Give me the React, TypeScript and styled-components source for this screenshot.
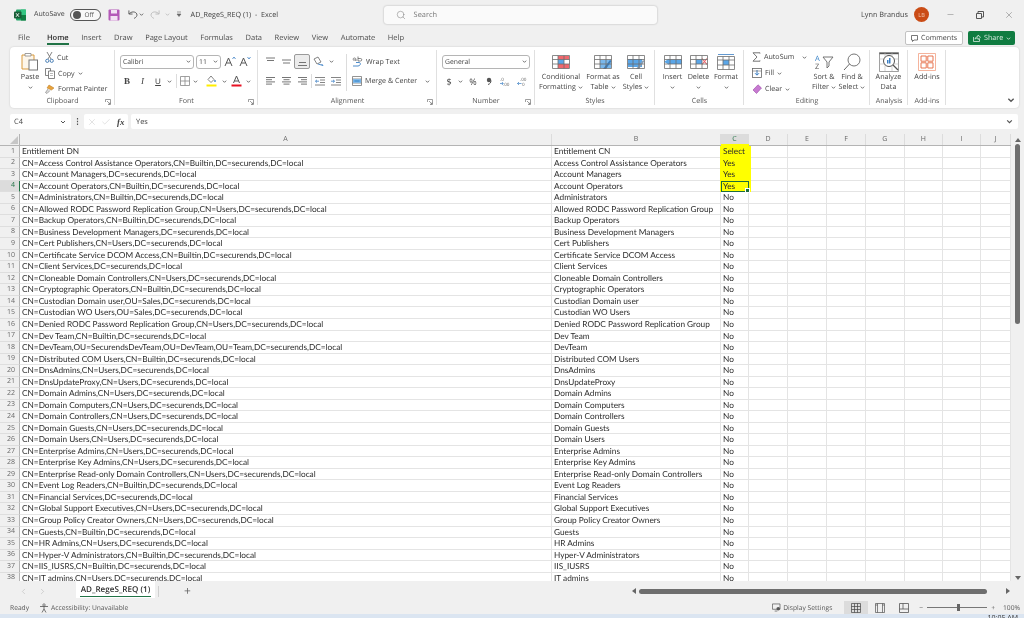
import React from "react";
import styled, { createGlobalStyle } from "styled-components";
import { Search, Minus, X, Check, ChevronLeft, ChevronRight } from "lucide-react";

const Global = createGlobalStyle`
  html, body { margin: 0; padding: 0; background: #f0f0f0; }
  body { font-family: "Open Sans", "Liberation Sans", sans-serif; text-rendering: geometricPrecision; }
  #root { width: 1024px; height: 618px; overflow: hidden; }
`;

const Page = styled.div`
  width: 1024px; height: 618px; display: flex; flex-direction: column; background: #f0f0f0;
  color: #3b3b3b; font-size: 7.9px; filter: blur(0.35px); overflow: hidden;
`;

/* ---------- title bar ---------- */
const TitleBar = styled.header`height: 29px; display: flex; align-items: center; padding-left: 14px; flex: none;`;
const AutoSaveLabel = styled.span`margin-left: 8px; font-size: 7px; color: #444;`;
const Toggle = styled.div`
  margin-left: 5px; width: 31px; height: 12px; border: 1px solid #555; border-radius: 7px; display: flex; align-items: center; box-sizing: border-box;
  gap: 4px; padding-left: 2px; font-size: 6.4px; color: #555; background: #f8f8f8; flex: none;
`;
const Knob = styled.i`width: 8px; height: 8px; border-radius: 50%; background: #555; display: block;`;
const QatSlot = styled.div<{ $w: number }>`width: ${p => p.$w}px; display: flex; justify-content: center; align-items: center; flex: none;`;
const DocTitle = styled.span`margin-left: 3px; width: 193px; font-size: 7.2px; color: #404040; flex: none; white-space: nowrap;`;
const SearchBox = styled.div`
  width: 273px; height: 18px; background: #fafafa; border-radius: 3px; box-shadow: 0 0 2px rgba(0,0,0,.3);
  display: flex; align-items: center; gap: 8px; padding-left: 12px; box-sizing: border-box; color: #777; font-size: 7.4px; flex: none;
`;
const UserName = styled.span`margin-left: auto; font-size: 7.3px; color: #444;`;
const Avatar = styled.div`
  margin-left: 6px; width: 15px; height: 15px; border-radius: 50%; background: #ca4c16; color: #f4c9b0; font-size: 5.6px;
  display: flex; align-items: center; justify-content: center;
`;
const WinControls = styled.div`display: flex; margin-left: 7px; width: 88px; color: #555;`;
const WinBtn = styled.div`width: 29px; display: flex; justify-content: center; align-items: center;`;

/* ---------- tabs ---------- */
const TabStrip = styled.nav`height: 18px; display: flex; align-items: center; padding: 0 9px 0 18px; gap: 12.6px; flex: none; font-size: 7.5px; color: #444;`;
const TabItem = styled.span<{ $on?: boolean }>`
  position: relative; font-weight: ${p => (p.$on ? 600 : 400)}; color: ${p => (p.$on ? "#2f2f2f" : "#4a4a4a")};
  &:first-child { margin-right: 4.5px; }
  ${p => p.$on && `&::after{content:"";position:absolute;left:0;right:0;bottom:-2px;height:2px;background:#217346;}`}
`;
const TabSpacer = styled.div`flex: 1;`;
const CommentsBtn = styled.div`
  width: 58px; height: 14px; border: 1px solid #c2c2c2; border-radius: 2px; background: #fff; box-sizing: border-box; flex: none;
  display: flex; align-items: center; justify-content: center; gap: 3px; font-size: 7.1px; color: #444;
`;
const ShareBtn = styled.div`
  margin-left: -7.6px; width: 47px; height: 14px; border-radius: 2px; background: #107c41; color: #d6eadf; box-sizing: border-box; flex: none;
  display: flex; align-items: center; gap: 3px; padding-left: 5px; font-size: 7.2px;
`;

/* ---------- ribbon ---------- */
const Ribbon = styled.section`
  margin: 0 5px 0 10px; height: 61px; background: #fff; border-radius: 4px; display: flex; flex: none; position: relative;
  box-shadow: 0 0 2px rgba(0,0,0,.18); font-size: 7.1px; color: #444;
`;
const Group = styled.div<{ $w: number }>`
  width: ${p => p.$w}px; flex: none; display: flex; flex-direction: column; position: relative; box-sizing: border-box;
  &::after { content: ""; position: absolute; right: 0; top: 3px; bottom: 3px; width: 1px; background: #e0e0e0; }
`;
const GroupBody = styled.div<{ $pl: number; $pt: number }>`flex: 1; display: flex; padding: ${p => p.$pt}px 0 0 ${p => p.$pl}px; min-height: 0;`;
const GroupLabel = styled.div`height: 11px; line-height: 9px; text-align: center; font-size: 7.1px; color: #555; flex: none;`;
const Launcher = styled.svg`position: absolute; right: 4px; bottom: 3px; width: 6px; height: 6px;`;
const Column = styled.div<{ $w?: number; $pt?: number; $ml?: number }>`
  display: flex; flex-direction: column; padding-top: ${p => p.$pt ?? 0}px; margin-left: ${p => p.$ml ?? 0}px;
  ${p => p.$w ? `width:${p.$w}px;flex:none;` : ""}
`;
const BigBtn = styled.div<{ $w: number; $ml?: number }>`
  width: ${p => p.$w}px; margin-left: ${p => p.$ml ?? 0}px; flex: none; display: flex; flex-direction: column; align-items: center; text-align: center;
`;
const BigIcon = styled.div<{ $h?: number }>`height: ${p => p.$h ?? 20}px; display: flex; align-items: center; justify-content: center; flex: none;`;
const BigText = styled.div`line-height: 10px; white-space: nowrap; font-size: 7.2px; color: #444; display: flex; align-items: center; justify-content: center; gap: 2px; height: 10px;`;
const SmallRow = styled.div`height: 16px; display: flex; align-items: center; gap: 3px; white-space: nowrap; font-size: 7.1px; color: #444;`;
const ToolRow = styled.div`height: 19.5px; display: flex; align-items: center; flex: none; white-space: nowrap;`;
const Slot = styled.div<{ $w: number; $on?: boolean }>`
  width: ${p => p.$w}px; height: 15px; flex: none; display: flex; align-items: center; justify-content: center; box-sizing: border-box; font-size: 9px; color: #444;
  ${p => p.$on && `background:#ececec;border:1px solid #9a9a9a;border-radius:2px;`}
`;
const Select = styled.div<{ $w: number; $ml?: number }>`
  width: ${p => p.$w}px; margin-left: ${p => p.$ml ?? 0}px; height: 14px; border: 1px solid #b5b5b5; border-radius: 3px; box-sizing: border-box; flex: none;
  display: flex; align-items: center; justify-content: space-between; padding: 0 2px; font-size: 6.8px; color: #444; background: #fff;
`;
const ThinSep = styled.div`width: 1px; height: 14px; background: #dcdcdc; flex: none;`;
const TallSep = styled.div`width: 1px; height: 37px; background: #dcdcdc; flex: none; margin: 2px 5px 0 0;`;
const Bold = styled.b`font-family: "Liberation Serif", serif; font-size: 9px;`;
const Ital = styled.i`font-family: "Liberation Serif", serif; font-size: 9px;`;
const Under = styled.u`font-family: "Liberation Sans", sans-serif; font-size: 8px;`;
const Collapse = styled.div`position: absolute; right: 4px; bottom: 4px; display: flex;`;

/* ---------- formula bar ---------- */
const FormulaBar = styled.div`height: 15px; margin: 6px 6px 0 10px; display: flex; flex: none; align-items: stretch;`;
const NameBox = styled.div`
  width: 61px; background: #fff; border-radius: 2px; display: flex; align-items: center; justify-content: space-between; padding: 0 5px 0 4px;
  box-sizing: border-box; font-size: 7.4px; color: #444;
`;
const Dots = styled.div`width: 13px; display: flex; align-items: center; justify-content: center; color: #555; font-size: 8px; font-weight: 700;`;
const FxBox = styled.div`
  width: 44px; background: #fff; border-radius: 2px; display: flex; align-items: center; gap: 4px; padding-left: 3px; box-sizing: border-box; color: #bbb;
`;
const Fx = styled.i`font-family: "Liberation Serif", serif; font-size: 9px; color: #444; font-weight: 700; margin-left: 2px;`;
const FormulaInput = styled.div`
  flex: 1; margin-left: 3px; background: #fff; border-radius: 2px; display: flex; align-items: center; justify-content: space-between;
  padding: 0 5px; font-size: 7.4px; color: #444;
`;

/* ---------- sheet ---------- */
const SheetWrap = styled.div`margin-top: 5px; height: 447px; display: flex; flex: none;`;
const Sheet = styled.div`width: 1011px; flex: none; overflow: hidden;`;
const columns = "20px 532px 169px 28px 39px 39px 39px 38.5px 38.5px 38px 30px";
const HeaderRow = styled.div`display: grid; grid-template-columns: ${columns}; height: 12px; border-bottom: 1px solid #b4b4b4; box-sizing: border-box;`;
const Corner = styled.div`border-right: 1px solid #b4b4b4; display: flex; justify-content: flex-end; align-items: flex-end; padding: 0 1px 1px 0;`;
const ColHead = styled.div<{ $on?: boolean }>`
  display: flex; align-items: center; justify-content: center; font-size: 7px; color: ${p => (p.$on ? "#217346" : "#666")};
  background: ${p => (p.$on ? "#dcdcdc" : "transparent")}; border-right: 1px solid #dcdcdc;
  ${p => p.$on && "box-shadow: inset 0 -1px 0 #217346;"}
`;
const Row = styled.div`display: grid; grid-template-columns: ${columns}; height: 11.54px;`;
const RowNum = styled.div<{ $on?: boolean }>`
  display: flex; align-items: center; justify-content: flex-end; padding-right: 4px; font-size: 7px; box-sizing: border-box;
  color: ${p => (p.$on ? "#217346" : "#6a6a6a")}; background: ${p => (p.$on ? "#dcdcdc" : "#f0f0f0")};
  border-right: 1px solid ${p => (p.$on ? "#217346" : "#b4b4b4")}; border-bottom: 1px solid #dedede;
`;
const Cell = styled.div<{ $hl?: boolean; $first?: boolean }>`
  background: ${p => (p.$hl ? "#ffff00" : "#fff")}; border-right: 1px solid #e4e4e4; border-bottom: 1px solid #e4e4e4; box-sizing: border-box;
  font-family: Lato, "Liberation Sans", sans-serif; font-size: 8.28px; line-height: 10.5px; padding-left: 2px; color: #2c2c2c; white-space: nowrap; position: relative;
  ${p => p.$hl && `border-color: #ffff00; box-shadow: 2px 0 0 #ffff00, -1px 0 0 #ffff00${p.$first ? ", 0 -2px 0 #ffff00" : ""}; z-index: 1;`}
`;
const ActiveCell = styled(Cell)`
  outline: 1.5px solid #1d6b3f; outline-offset: -1px; z-index: 2;
  &::after { content: ""; position: absolute; right: -2px; bottom: -2px; width: 3px; height: 3px; background: #1d6b3f; border: 0.5px solid #fff; }
`;
const VScroll = styled.aside`width: 13px; flex: none; display: flex; flex-direction: column; align-items: center; padding-top: 4px; box-sizing: border-box;`;
const VThumb = styled.div`width: 5px; height: 180px; margin-top: 2px; background: #6e6e6e; border-radius: 3px;`;
const Arrow = styled.div<{ $dir: "up" | "down" | "left" | "right" }>`
  width: 0; height: 0; flex: none;
  ${p => p.$dir === "up" && "border-left:3px solid transparent;border-right:3px solid transparent;border-bottom:4px solid #666;"}
  ${p => p.$dir === "down" && "border-left:3px solid transparent;border-right:3px solid transparent;border-top:4px solid #666;margin-top:auto;margin-bottom:1px;"}
  ${p => p.$dir === "left" && "border-top:3px solid transparent;border-bottom:3px solid transparent;border-right:4px solid #666;"}
  ${p => p.$dir === "right" && "border-top:3px solid transparent;border-bottom:3px solid transparent;border-left:4px solid #666;"}
`;

/* ---------- sheet tabs ---------- */
const TabBar = styled.div`height: 20px; display: flex; align-items: center; flex: none;`;
const SheetNav = styled.div`width: 76px; display: flex; gap: 10px; padding-left: 19px; box-sizing: border-box; flex: none; color: #aaa;`;
const SheetTab = styled.div`
  width: 79px; height: 17px; margin-bottom: 3px; background: #fff; flex: none; display: flex; align-items: center; justify-content: center;
  font-size: 8.1px; font-weight: 600; color: #2f2f2f; position: relative;
  &::after { content: ""; position: absolute; left: 4px; right: 4px; bottom: 1px; height: 1.5px; background: #217346; }
`;
const TabDivider = styled.div`width: 1px; height: 11px; background: #d0d0d0; margin-left: 3px; flex: none;`;
const AddSheet = styled.div`margin-left: 25px; font-size: 12px; color: #666; width: 8px; flex: none; line-height: 10px;`;
const HScroll = styled.div`margin-left: 440px; width: 378px; display: flex; align-items: center; flex: none;`;
const HThumb = styled.div`width: 348px; height: 5px; background: #6e6e6e; border-radius: 3px; margin-left: 3px;`;
const HRight = styled.div`margin-left: auto; display: flex;`;

/* ---------- status bar ---------- */
const StatusBar = styled.footer`height: 13px; display: flex; align-items: center; padding: 0 5px 0 10px; font-size: 6.7px; color: #555; flex: none;`;
const StatusItem = styled.span<{ $ml?: number }>`margin-left: ${p => p.$ml ?? 0}px; display: flex; align-items: center; gap: 2px; white-space: nowrap;`;
const StatusRight = styled.div`margin-left: auto; display: flex; align-items: center;`;
const DisplaySettings = styled.span`width: 60px; flex: none; display: flex; align-items: center; gap: 2px; white-space: nowrap;`;
const Views = styled.div`margin-left: 12px; display: flex; flex: none;`;
const ViewBtn = styled.div<{ $on?: boolean }>`
  width: 24px; height: 13px; display: flex; align-items: center; justify-content: center; background: ${p => (p.$on ? "#dcdcdc" : "transparent")}; flex: none;
`;
const ZoomCtl = styled.div`margin-left: 3px; display: flex; align-items: center; flex: none;`;
const ZoomSlider = styled.div`width: 60px; height: 1px; background: #777; margin: 0 4px; position: relative; flex: none;`;
const ZoomThumb = styled.i`position: absolute; left: 30px; top: -3px; width: 3px; height: 7px; background: #666;`;
const ZoomPct = styled.span`width: 16px; margin-left: 8px; flex: none; white-space: nowrap;`;
const Strip = styled.div`height: 5px; background: #dbe5f1; display: flex; justify-content: flex-end; padding-right: 6px; font-size: 7px; color: #333; overflow: hidden; line-height: 9px; flex: none;`;

/* ---------- icons ---------- */
const Chev = ({ s = 5, c = "#555" }: { s?: number; c?: string }) => (
  <svg width={s} height={s} viewBox="0 0 6 6"><path d="M1 2l2 2 2-2" fill="none" stroke={c} strokeWidth="1" /></svg>
);
const ExcelLogo = () => (
  <svg width="12" height="12" viewBox="0 0 12 12">
    <rect x="2" y="0.5" width="10" height="11" rx="1" fill="#21a366" />
    <rect x="7" y="0.5" width="5" height="5.5" fill="#33c481" />
    <rect x="7" y="6" width="5" height="5.5" fill="#107c41" />
    <rect x="0" y="2.5" width="7.5" height="7" rx="1" fill="#185c37" />
    <path d="M2 4.2l3 3.6M5 4.2l-3 3.6" stroke="#fff" strokeWidth="0.9" />
  </svg>
);
const SaveIcon = () => (
  <svg width="12" height="12" viewBox="0 0 12 12">
    <rect x="0.5" y="0.5" width="11" height="11" rx="1" fill="#b45ab8" />
    <rect x="3" y="1" width="6" height="3.5" fill="#f3e3f4" />
    <rect x="2.5" y="7" width="7" height="4.5" fill="#f3e3f4" />
  </svg>
);
const UndoIcon = ({ c, flip }: { c: string; flip?: boolean }) => (
  <svg width="10" height="11" viewBox="0 0 11 11" style={flip ? { transform: "scaleX(-1)" } : undefined}>
    <path d="M1 1v4h4M1.3 5C3 2 8.5 1.8 9.7 5c.7 2-.8 3.8-3 4.8" fill="none" stroke={c} strokeWidth="1" />
  </svg>
);
const QatMore = () => (
  <svg width="6" height="7" viewBox="0 0 6 7"><path d="M1 1h4M1 3l2 2.5L5 3z" fill="#666" stroke="#666" strokeWidth="0.6" /></svg>
);
const RestoreIcon = () => (
  <svg width="8" height="8" viewBox="0 0 8 8"><path d="M.5 2.5h5v5h-5zM2 2.5V.5h5.5V6H5.5" fill="none" stroke="#555" /></svg>
);
const CommentIco = () => (
  <svg width="7" height="7" viewBox="0 0 7 7"><path d="M.5.5h6v4.5H3L1.5 6.5V5h-1z" fill="none" stroke="#555" strokeWidth=".8" /></svg>
);
const ShareIco = () => (
  <svg width="8" height="8" viewBox="0 0 8 8"><path d="M.5 3v4.5h6V5M2 5.2C2.3 3.2 4 2.5 5 2.5V1l2.5 2.3L5 5.5V4C3.8 4 2.7 4.3 2 5.2z" fill="none" stroke="#d6eadf" strokeWidth=".8" /></svg>
);
const PasteIco = () => (
  <svg width="20" height="20" viewBox="0 0 20 20">
    <path d="M2 4h12v14H2z" fill="#fdf6ea" stroke="#d99a3c" strokeWidth="1" />
    <path d="M5 2.5h6V5H5z" fill="#fff" stroke="#888" strokeWidth=".8" />
    <rect x="9" y="9" width="8.5" height="10" fill="#fff" stroke="#777" strokeWidth="1" />
  </svg>
);
const CutIco = () => (
  <svg width="9" height="11" viewBox="0 0 9 11"><path d="M2 0l4 7M7 0L3 7" stroke="#777" strokeWidth=".9" fill="none" /><circle cx="2.3" cy="8.8" r="1.6" fill="none" stroke="#4a7fb5" /><circle cx="6.7" cy="8.8" r="1.6" fill="none" stroke="#4a7fb5" /></svg>
);
const CopyIco = () => (
  <svg width="10" height="11" viewBox="0 0 10 11"><path d="M.5.5h5v7h-5z" fill="#fff" stroke="#666" strokeWidth=".8" /><path d="M3.5 3h6v7.5h-6z" fill="#fff" stroke="#666" strokeWidth=".8" /><path d="M5 5.5h3M5 7.5h3" stroke="#999" strokeWidth=".7" /></svg>
);
const PainterIco = () => (
  <svg width="10" height="10" viewBox="0 0 10 10"><path d="M4 1l5 3-2.5 2L2 4z" fill="#e8a33d" stroke="#b9771f" strokeWidth=".5" /><path d="M3 5L.5 8.5 2 9.5 5 6.5" fill="#ddd" stroke="#777" strokeWidth=".6" /></svg>
);
const LauncherIco = () => (
  <Launcher viewBox="0 0 6 6"><path d="M.5 3V.5H5.5M5.5 .5V5.5H3M2 2l3 3M3.5 5H5V3.5" fill="none" stroke="#777" strokeWidth=".7" /></Launcher>
);
const GrowA = ({ down }: { down?: boolean }) => (
  <svg width="12" height="11" viewBox="0 0 12 11">
    <path d="M1 10l3.5-8L8 10M2.5 7h4" fill="none" stroke="#555" strokeWidth="1" />
    <path d={down ? "M8.5 1l1.5 2 1.5-2" : "M8.5 3l1.5-2 1.5 2"} fill="none" stroke="#3b7fc4" strokeWidth=".8" />
  </svg>
);
const Lines = ({ v }: { v: number[][] }) => (
  <svg width="11" height="10" viewBox="0 0 11 10">
    {v.map((l, i) => <path key={i} d={`M${l[0]} ${l[2]}H${l[1]}`} stroke="#666" strokeWidth=".9" />)}
  </svg>
);
const BordersIco = () => (
  <svg width="10" height="10" viewBox="0 0 10 10"><path d="M.5.5h9v9h-9zM5 .5v9M.5 5h9" fill="none" stroke="#888" strokeWidth=".8" /></svg>
);
const FillIco = () => (
  <svg width="11" height="12" viewBox="0 0 11 12"><path d="M5 1L2 4.5 5 7.5 8 4.5z" fill="#fff" stroke="#666" strokeWidth=".8" /><circle cx="9" cy="6" r=".9" fill="#3b7fc4" /><rect x="0.5" y="9.5" width="10" height="2" fill="#ffee00" /></svg>
);
const ColorA = () => (
  <svg width="11" height="12" viewBox="0 0 11 12"><path d="M2.5 8l3-7 3 7M3.5 6h4" fill="none" stroke="#555" strokeWidth="1" /><rect x="0.5" y="9.5" width="10" height="2" fill="#e81123" /></svg>
);
const OrientIco = () => (
  <svg width="12" height="11" viewBox="0 0 12 11"><path d="M1 3l4-2 3 5-4 2z" fill="none" stroke="#666" strokeWidth=".8" /><path d="M5 8l5 1.5M10 9.5L8.5 8" stroke="#3b7fc4" strokeWidth=".9" fill="none" /></svg>
);
const IndentIco = ({ dec }: { dec?: boolean }) => (
  <svg width="10" height="9" viewBox="0 0 10 9"><path d="M0 .5h10M5 3h5M5 5.5h5M0 8h10" stroke="#666" strokeWidth=".8" /><path d={dec ? "M4 4.2H.5M2 2.8L.5 4.2 2 5.6" : "M0 4.2h3.5M2 2.8l1.5 1.4L2 5.6"} fill="none" stroke="#3b7fc4" strokeWidth=".8" /></svg>
);
const WrapIco = () => (
  <svg width="11" height="11" viewBox="0 0 11 11"><path d="M1 3.5C1 1.5 4 1.5 4 3.5V5M1 4h3" fill="none" stroke="#555" strokeWidth=".7" /><path d="M6 .5v4.5h2.5a1 1 0 000-2.5H6" fill="none" stroke="#555" strokeWidth=".7" /><path d="M1 10h5c2.5 0 3-3 1.5-3.5H4" fill="none" stroke="#3b7fc4" strokeWidth=".9" /></svg>
);
const MergeIco = () => (
  <svg width="10" height="10" viewBox="0 0 10 10"><path d="M.5.5h9v9h-9zM.5 3h9M.5 7h9" fill="none" stroke="#666" strokeWidth=".7" /><rect x="1" y="3.2" width="8" height="3.6" fill="#76b5ea" /><path d="M2.5 5h5" stroke="#1f6db5" strokeWidth=".7" /></svg>
);
const CommaIco = () => (
  <svg width="6" height="8" viewBox="0 0 6 8"><circle cx="3" cy="3" r="2.2" fill="#555" /><path d="M5 3.5C5 5.5 4 7 2 7.5" fill="none" stroke="#555" strokeWidth="1" /></svg>
);
const DecimalIco = ({ dec }: { dec?: boolean }) => (
  <svg width="11" height="11" viewBox="0 0 11 11">
    <text x={dec ? "3" : "0"} y="4.5" fontSize="4.6" fontFamily="Open Sans" fill="#666">{dec ? ".00" : ".0"}</text>
    <text x={dec ? "5" : "3"} y="10" fontSize="4.6" fontFamily="Open Sans" fill="#666">{dec ? "0" : ".00"}</text>
    <path d={dec ? "M.5 7.5h4M2 6L.5 7.5 2 9" : "M0 7.5h3M2 6l1.2 1.5L2 9"} fill="none" stroke="#3b7fc4" strokeWidth=".7" />
  </svg>
);
const Table = ({ children, w = 18, h = 14 }: { children?: React.ReactNode; w?: number; h?: number }) => (
  <svg width={w} height={h} viewBox="0 0 18 14">
    {children}
    <path d="M.5.5h17v13H.5zM.5 4.5h17M.5 9h17M6 .5v13M12 .5v13" fill="none" stroke="#6d6d6d" strokeWidth=".8" />
  </svg>
);
const CondIco = () => <Table><rect x="6" y="1" width="6" height="3.5" fill="#f0686e" /><rect x="6" y="4.5" width="6" height="4.5" fill="#5aa6e8" /><rect x="6" y="9" width="11" height="4.5" fill="#f0686e" /><rect x="12" y="1" width="5" height="3.5" fill="#f0686e" /></Table>;
const FmtTblIco = () => <Table><rect x="6" y="5" width="11" height="8" fill="#7ab8ec" /><path d="M9 14l7-9 1.5 1L12 14z" fill="#3a7dbd" /></Table>;
const CellStyIco = () => <Table><rect x="1" y="4" width="14" height="8" fill="#5aa6e8" /><path d="M9 14l7-9 1.5 1L12 14z" fill="#8aa0b5" /></Table>;
const InsertIco = () => <Table><rect x="5" y="4.5" width="13" height="4.5" fill="#5aa6e8" /><path d="M0 6.7L5 3.7v6z" fill="#5aa6e8" /></Table>;
const DeleteIco = () => <Table><rect x="6" y="4.5" width="6" height="4.5" fill="#5aa6e8" /><path d="M12 3.5l5 6M17 3.5l-5 6" stroke="#e8636a" strokeWidth="1.1" /></Table>;
const FormatIco = () => (
  <svg width="18" height="16" viewBox="0 0 18 16"><path d="M1 .5h16" stroke="#3b7fc4" strokeWidth=".8" /><rect x="6" y="6" width="6" height="5" fill="#5aa6e8" /><path d="M.5 2.5h17v13H.5zM.5 6h17M.5 11h17M6 2.5v13M12 2.5v13" fill="none" stroke="#6d6d6d" strokeWidth=".8" /></svg>
);
const SigmaIco = () => (
  <svg width="9" height="10" viewBox="0 0 9 10"><path d="M8 1.5V.8H1L5 5 1 9.2h7v-.7" fill="none" stroke="#666" strokeWidth=".9" /></svg>
);
const FillDownIco = () => (
  <svg width="10" height="10" viewBox="0 0 10 10"><rect x=".5" y=".5" width="9" height="9" fill="#fff" stroke="#666" strokeWidth=".8" /><path d="M5 2v5M3 5.2L5 7.2 7 5.2" fill="none" stroke="#3b7fc4" strokeWidth="1" /><path d="M.5 3h9" stroke="#666" strokeWidth=".6" /></svg>
);
const EraserIco = () => (
  <svg width="10" height="10" viewBox="0 0 10 10"><path d="M6 .8L9.5 4 4.5 9.5 1 6z" fill="#c77ad1" stroke="#9a4aa6" strokeWidth=".6" /></svg>
);
const SortIco = () => (
  <svg width="20" height="18" viewBox="0 0 20 18">
    <text x="1" y="7.5" fontSize="7.5" fontFamily="Open Sans" fill="#2f7cc4">A</text>
    <text x="1" y="15.5" fontSize="7.5" fontFamily="Open Sans" fill="#555">Z</text>
    <path d="M9 4h10l-4 5v4l-2 2V9z" fill="none" stroke="#666" strokeWidth=".9" />
  </svg>
);
const FindIco = () => (
  <svg width="18" height="18" viewBox="0 0 18 18"><circle cx="11" cy="7" r="6" fill="none" stroke="#666" strokeWidth=".9" /><path d="M6.5 11L1 17" stroke="#666" strokeWidth="1" /></svg>
);
const AnalyzeIco = () => (
  <svg width="20" height="20" viewBox="0 0 20 20">
    <path d="M.5.5h19v19H.5z" fill="none" stroke="#777" strokeWidth=".7" />
    <path d="M.5 1.5h19" stroke="#555" strokeWidth="1.4" />
    <path d="M.5 7h19M.5 12h19M6 1v18M13 1v18" stroke="#bbb" strokeWidth=".6" />
    <circle cx="10" cy="9" r="5.5" fill="#fff" stroke="#555" strokeWidth="1" />
    <rect x="8" y="8" width="1.5" height="3.5" fill="#3b7fc4" /><rect x="10" y="6" width="1.5" height="5.5" fill="#3b7fc4" />
    <path d="M14 13l5 5" stroke="#555" strokeWidth="1.3" />
  </svg>
);
const AddinIco = () => (
  <svg width="18" height="18" viewBox="0 0 18 18"><path d="M.5.5h17v17H.5z" fill="none" stroke="#f2a184" strokeWidth=".8" /><path d="M3 3h5.2v5.2H3zM9.8 3H15v5.2H9.8zM3 9.8h5.2V15H3zM9.8 9.8H15V15H9.8z" fill="none" stroke="#e5683f" strokeWidth=".9" /></svg>
);
const CornerTri = () => (
  <svg width="8" height="8" viewBox="0 0 8 8"><path d="M8 0v8H0z" fill="#c6c6c6" /></svg>
);
const AccessIco = () => (
  <svg width="10" height="10" viewBox="0 0 10 10"><circle cx="5" cy="2" r="1.2" fill="none" stroke="#555" strokeWidth=".7" /><path d="M1 3.5h8M5 3.5V6M5 6L3 9.5M5 6l2 3.5" fill="none" stroke="#555" strokeWidth=".8" /></svg>
);
const DisplayIco = () => (
  <svg width="10" height="9" viewBox="0 0 10 9"><path d="M.5.5h8.5v6H.5z" fill="none" stroke="#555" strokeWidth=".8" /><circle cx="7" cy="6" r="2" fill="#555" /><path d="M3 8.5h3" stroke="#555" strokeWidth=".8" /></svg>
);
const NormalView = () => (
  <svg width="10" height="10" viewBox="0 0 10 10"><path d="M.5.5h9v9h-9zM.5 3.5h9M.5 6.5h9M3.5.5v9M6.5.5v9" fill="none" stroke="#444" strokeWidth=".7" /></svg>
);
const PageView = () => (
  <svg width="10" height="10" viewBox="0 0 10 10"><path d="M.5.5h9v9h-9zM2.5.5v9M7.5.5v9M.5 2h2M7.5 2h2" fill="none" stroke="#555" strokeWidth=".7" /></svg>
);
const BreakView = () => (
  <svg width="10" height="10" viewBox="0 0 10 10"><path d="M.5.5h9v9h-9zM.5 6h9M4 .5V6" fill="none" stroke="#555" strokeWidth=".8" /></svg>
);

/* ---------- data ---------- */
const S = "DC=securends,DC=local";
const rows: [string, string][] = [
  ["Access Control Assistance Operators", "CN=Builtin"], ["Account Managers", ""], ["Account Operators", "CN=Builtin"],
  ["Administrators", "CN=Builtin"], ["Allowed RODC Password Replication Group", "CN=Users"], ["Backup Operators", "CN=Builtin"],
  ["Business Development Managers", ""], ["Cert Publishers", "CN=Users"], ["Certificate Service DCOM Access", "CN=Builtin"],
  ["Client Services", ""], ["Cloneable Domain Controllers", "CN=Users"], ["Cryptographic Operators", "CN=Builtin"],
  ["Custodian Domain user", "OU=Sales"], ["Custodian WO Users", "OU=Sales"], ["Denied RODC Password Replication Group", "CN=Users"],
  ["Dev Team", "CN=Builtin"], ["DevTeam", "OU=SecurendsDevTeam,OU=DevTeam,OU=Team"], ["Distributed COM Users", "CN=Builtin"],
  ["DnsAdmins", "CN=Users"], ["DnsUpdateProxy", "CN=Users"], ["Domain Admins", "CN=Users"], ["Domain Computers", "CN=Users"],
  ["Domain Controllers", "CN=Users"], ["Domain Guests", "CN=Users"], ["Domain Users", "CN=Users"], ["Enterprise Admins", "CN=Users"],
  ["Enterprise Key Admins", "CN=Users"], ["Enterprise Read-only Domain Controllers", "CN=Users"], ["Event Log Readers", "CN=Builtin"],
  ["Financial Services", ""], ["Global Support Executives", "CN=Users"], ["Group Policy Creator Owners", "CN=Users"],
  ["Guests", "CN=Builtin"], ["HR Admins", "CN=Users"], ["Hyper-V Administrators", "CN=Builtin"], ["IIS_IUSRS", "CN=Builtin"], ["IT admins", "CN=Users"],
];
const sheetRows = [
  { a: "Entitlement DN", b: "Entitlement CN", c: "Select" },
  ...rows.map(([n, ou], i) => ({ a: `CN=${n},${ou ? ou + "," : ""}${S}`, b: n, c: i < 3 ? "Yes" : "No" })),
];
const tabs = ["File", "Home", "Insert", "Draw", "Page Layout", "Formulas", "Data", "Review", "View", "Automate", "Help"];
const cols = ["A", "B", "C", "D", "E", "F", "G", "H", "I", "J"];
const emptyCols = ["d", "e", "f", "g", "h", "i", "j"];

export default function App() {
  return (
    <Page>
      <Global />
      <TitleBar>
        <ExcelLogo />
        <AutoSaveLabel>AutoSave</AutoSaveLabel>
        <Toggle><Knob />Off</Toggle>
        <QatSlot $w={27}><SaveIcon /></QatSlot>
        <QatSlot $w={11}><UndoIcon c="#555" /></QatSlot>
        <QatSlot $w={6}><Chev /></QatSlot>
        <QatSlot $w={20}><UndoIcon c="#bbb" flip /></QatSlot>
        <QatSlot $w={5}><Chev c="#bbb" /></QatSlot>
        <QatSlot $w={18}><QatMore /></QatSlot>
        <DocTitle>AD_RegeS_REQ (1)&nbsp; -&nbsp; Excel</DocTitle>
        <SearchBox><Search size={10} strokeWidth={1.2} />Search</SearchBox>
        <UserName>Lynn Brandus</UserName>
        <Avatar>LB</Avatar>
        <WinControls>
          <WinBtn><Minus size={9} strokeWidth={1} /></WinBtn>
          <WinBtn><RestoreIcon /></WinBtn>
          <WinBtn><X size={10} strokeWidth={1} /></WinBtn>
        </WinControls>
      </TitleBar>

      <TabStrip>
        {tabs.map(t => <TabItem key={t} $on={t === "Home"}>{t}</TabItem>)}
        <TabSpacer />
        <CommentsBtn><CommentIco />Comments</CommentsBtn>
        <ShareBtn><ShareIco />Share<Chev c="#d6eadf" /></ShareBtn>
      </TabStrip>

      <Ribbon>
        <Group $w={105}>
          <GroupBody $pl={9} $pt={3}>
            <BigBtn $w={22}>
              <BigIcon $h={22}><PasteIco /></BigIcon>
              <BigText>Paste</BigText>
              <BigText><Chev /></BigText>
            </BigBtn>
            <Column $w={70} $ml={4}>
              <SmallRow><CutIco />Cut</SmallRow>
              <SmallRow><CopyIco />Copy<Chev /></SmallRow>
              <SmallRow><PainterIco />Format Painter</SmallRow>
            </Column>
          </GroupBody>
          <GroupLabel>Clipboard</GroupLabel>
          <LauncherIco />
        </Group>

        <Group $w={143}>
          <GroupBody $pl={5} $pt={5}>
            <Column>
              <ToolRow>
                <Select $w={74}>Calibri<Chev /></Select>
                <Select $w={25} $ml={2}>11<Chev /></Select>
                <Slot $w={18}><GrowA /></Slot>
                <Slot $w={12}><GrowA down /></Slot>
              </ToolRow>
              <ToolRow>
                <Slot $w={14}><Bold>B</Bold></Slot>
                <Slot $w={17}><Ital>I</Ital></Slot>
                <Slot $w={14}><Under>U</Under></Slot>
                <Slot $w={8}><Chev /></Slot>
                <Slot $w={6}><ThinSep /></Slot>
                <Slot $w={12}><BordersIco /></Slot>
                <Slot $w={9}><Chev /></Slot>
                <Slot $w={22}><FillIco /></Slot>
                <Slot $w={5}><Chev /></Slot>
                <Slot $w={19}><ColorA /></Slot>
                <Slot $w={5}><Chev /></Slot>
              </ToolRow>
            </Column>
          </GroupBody>
          <GroupLabel>Font</GroupLabel>
          <LauncherIco />
        </Group>

        <Group $w={179}>
          <GroupBody $pl={4} $pt={5}>
            <Column $w={84}>
              <ToolRow>
                <Slot $w={16}><Lines v={[[1, 10, 1], [2, 9, 3.5]]} /></Slot>
                <Slot $w={16}><Lines v={[[1, 10, 3], [2, 9, 6]]} /></Slot>
                <Slot $w={16} $on><Lines v={[[2, 9, 5.5], [1, 10, 8.5]]} /></Slot>
                <Slot $w={18}><OrientIco /></Slot>
                <Slot $w={6}><Chev /></Slot>
              </ToolRow>
              <ToolRow>
                <Slot $w={16}><Lines v={[[1, 10, 1.5], [1, 7, 3.7], [1, 10, 5.9], [1, 7, 8.1]]} /></Slot>
                <Slot $w={16}><Lines v={[[1, 10, 1.5], [2.5, 8.5, 3.7], [1, 10, 5.9], [2.5, 8.5, 8.1]]} /></Slot>
                <Slot $w={16}><Lines v={[[1, 10, 1.5], [4, 10, 3.7], [1, 10, 5.9], [4, 10, 8.1]]} /></Slot>
                <Slot $w={2}><ThinSep /></Slot>
                <Slot $w={16}><IndentIco dec /></Slot>
                <Slot $w={16}><IndentIco /></Slot>
              </ToolRow>
            </Column>
            <TallSep />
            <Column>
              <ToolRow><SmallRow><WrapIco />Wrap Text</SmallRow></ToolRow>
              <ToolRow><SmallRow><MergeIco />Merge &amp; Center<Slot $w={15}><Chev /></Slot></SmallRow></ToolRow>
            </Column>
          </GroupBody>
          <GroupLabel>Alignment</GroupLabel>
          <LauncherIco />
        </Group>

        <Group $w={98}>
          <GroupBody $pl={5} $pt={5}>
            <Column>
              <ToolRow><Select $w={88}>General<Chev /></Select></ToolRow>
              <ToolRow>
                <Slot $w={14}>$</Slot>
                <Slot $w={8}><Chev /></Slot>
                <Slot $w={18}>%</Slot>
                <Slot $w={14}><CommaIco /></Slot>
                <Slot $w={18}><DecimalIco /></Slot>
                <Slot $w={16}><DecimalIco dec /></Slot>
              </ToolRow>
            </Column>
          </GroupBody>
          <GroupLabel>Number</GroupLabel>
          <LauncherIco />
        </Group>

        <Group $w={120}>
          <GroupBody $pl={5} $pt={5}>
            <BigBtn $w={42}>
              <BigIcon><CondIco /></BigIcon>
              <BigText>Conditional</BigText>
              <BigText>Formatting<Chev /></BigText>
            </BigBtn>
            <BigBtn $w={32} $ml={5}>
              <BigIcon><FmtTblIco /></BigIcon>
              <BigText>Format as</BigText>
              <BigText>Table<Chev /></BigText>
            </BigBtn>
            <BigBtn $w={26} $ml={4}>
              <BigIcon><CellStyIco /></BigIcon>
              <BigText>Cell</BigText>
              <BigText>Styles<Chev /></BigText>
            </BigBtn>
          </GroupBody>
          <GroupLabel>Styles</GroupLabel>
        </Group>

        <Group $w={89}>
          <GroupBody $pl={8} $pt={5}>
            <BigBtn $w={19}><BigIcon><InsertIco /></BigIcon><BigText>Insert</BigText><BigText><Chev /></BigText></BigBtn>
            <BigBtn $w={19} $ml={7}><BigIcon><DeleteIco /></BigIcon><BigText>Delete</BigText><BigText><Chev /></BigText></BigBtn>
            <BigBtn $w={24} $ml={6}><BigIcon><FormatIco /></BigIcon><BigText>Format</BigText><BigText><Chev /></BigText></BigBtn>
          </GroupBody>
          <GroupLabel>Cells</GroupLabel>
        </Group>

        <Group $w={126}>
          <GroupBody $pl={8} $pt={2}>
            <Column $w={60}>
              <SmallRow><SigmaIco />AutoSum<Slot $w={14}><Chev /></Slot></SmallRow>
              <SmallRow><FillDownIco />Fill<Chev /></SmallRow>
              <SmallRow><EraserIco />Clear<Chev /></SmallRow>
            </Column>
            <Column $pt={3}>
              <BigBtn $w={24}><BigIcon><SortIco /></BigIcon><BigText>Sort &amp;</BigText><BigText>Filter<Chev /></BigText></BigBtn>
            </Column>
            <Column $pt={3}>
              <BigBtn $w={28} $ml={2}><BigIcon><FindIco /></BigIcon><BigText>Find &amp;</BigText><BigText>Select<Chev /></BigText></BigBtn>
            </Column>
          </GroupBody>
          <GroupLabel>Editing</GroupLabel>
        </Group>

        <Group $w={38}>
          <GroupBody $pl={4} $pt={4}>
            <BigBtn $w={29}><BigIcon $h={21}><AnalyzeIco /></BigIcon><BigText>Analyze</BigText><BigText>Data</BigText></BigBtn>
          </GroupBody>
          <GroupLabel>Analysis</GroupLabel>
        </Group>

        <Group $w={38}>
          <GroupBody $pl={5} $pt={4}>
            <BigBtn $w={28}><BigIcon $h={21}><AddinIco /></BigIcon><BigText>Add-ins</BigText></BigBtn>
          </GroupBody>
          <GroupLabel>Add-ins</GroupLabel>
        </Group>
        <Collapse><Chev s={8} /></Collapse>
      </Ribbon>

      <FormulaBar>
        <NameBox>C4<Chev s={6} /></NameBox>
        <Dots>⋮</Dots>
        <FxBox><X size={10} strokeWidth={1} /><Check size={10} strokeWidth={1} /><Fx>fx</Fx></FxBox>
        <FormulaInput>Yes<Chev s={7} /></FormulaInput>
      </FormulaBar>

      <SheetWrap>
        <Sheet>
          <HeaderRow>
            <Corner><CornerTri /></Corner>
            {cols.map(c => <ColHead key={c} $on={c === "C"}>{c}</ColHead>)}
          </HeaderRow>
          {sheetRows.map((r, i) => {
            const active = i === 3;
            return (
              <Row key={i}>
                <RowNum $on={active}>{i + 1}</RowNum>
                <Cell>{r.a}</Cell>
                <Cell>{r.b}</Cell>
                {active ? <ActiveCell $hl>{r.c}</ActiveCell> : <Cell $hl={i < 4} $first={i === 0}>{r.c}</Cell>}
                {emptyCols.map(k => <Cell key={k} />)}
              </Row>
            );
          })}
        </Sheet>
        <VScroll>
          <Arrow $dir="up" />
          <VThumb />
          <Arrow $dir="down" />
        </VScroll>
      </SheetWrap>

      <TabBar>
        <SheetNav><ChevronLeft size={9} strokeWidth={1.2} /><ChevronRight size={9} strokeWidth={1.2} /></SheetNav>
        <SheetTab>AD_RegeS_REQ (1)</SheetTab>
        <TabDivider />
        <AddSheet>+</AddSheet>
        <HScroll>
          <Arrow $dir="left" />
          <HThumb />
          <HRight><Arrow $dir="right" /></HRight>
        </HScroll>
      </TabBar>

      <StatusBar>
        <StatusItem>Ready</StatusItem>
        <StatusItem $ml={10}><AccessIco />Accessibility: Unavailable</StatusItem>
        <StatusRight>
          <DisplaySettings><DisplayIco />Display Settings</DisplaySettings>
          <Views>
            <ViewBtn $on><NormalView /></ViewBtn>
            <ViewBtn><PageView /></ViewBtn>
            <ViewBtn><BreakView /></ViewBtn>
          </Views>
          <ZoomCtl>−<ZoomSlider><ZoomThumb /></ZoomSlider>+</ZoomCtl>
          <ZoomPct>100%</ZoomPct>
        </StatusRight>
      </StatusBar>
      <Strip>10:05 AM</Strip>
    </Page>
  );
}
